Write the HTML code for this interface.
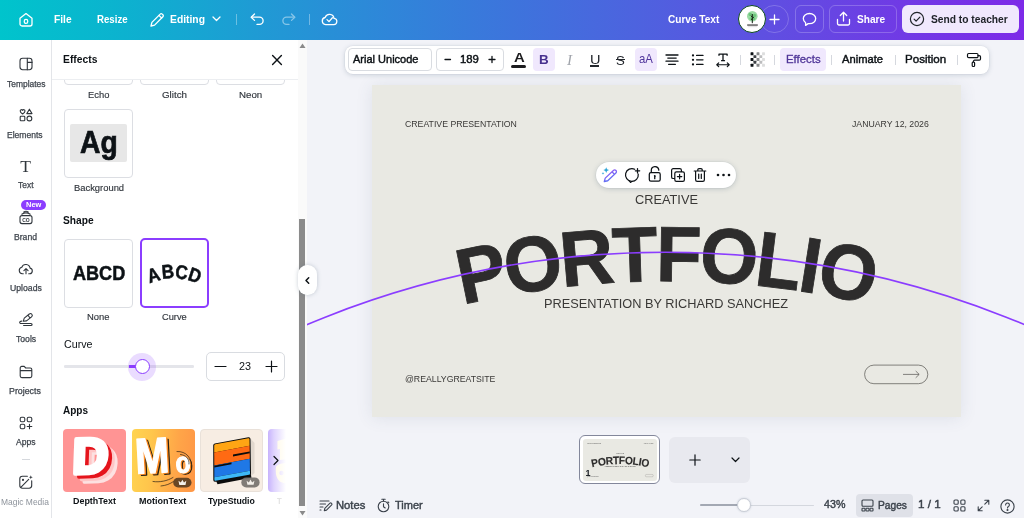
<!DOCTYPE html>
<html lang="en">
<head>
<meta charset="utf-8">
<title>Curve Text - Canva</title>
<style>
*{box-sizing:border-box;margin:0;padding:0}
html,body{width:1024px;height:518px;overflow:hidden;background:#f2f3f8;font-family:"Liberation Sans","DejaVu Sans",sans-serif;color:#0d1216}
svg{position:absolute;overflow:visible}
.tx{position:absolute;white-space:nowrap;line-height:1;transform-origin:0 50%;display:block}
.ic{fill:none;stroke:#0d1216;stroke-width:1.2;stroke-linecap:round;stroke-linejoin:round}
#hdr{position:absolute;left:0;top:0;width:1024px;height:39.700px;background:linear-gradient(90deg,#00c4cc 0%,#0cb2cf 12%,#1f9bd4 25%,#2f86d9 38%,#3d74dc 50%,#4d63df 62%,#5f4fe1 75%,#703ae5 88%,#7d2ae8 100%)}
#hdr .t{position:absolute;color:#fff;font-weight:700;font-size:11px;line-height:14px;top:12px;white-space:nowrap;letter-spacing:-.1px}
#hdr .w{fill:none;stroke:#fff;stroke-width:1.3;stroke-linecap:round;stroke-linejoin:round}
#rail{position:absolute;left:0;top:40px;width:52px;height:478px;background:#fff;border-right:1px solid #e3e5e9}
.rl{position:absolute;width:60px;left:-4px;text-align:center;font-size:8.4px;color:#30363c;line-height:10px;white-space:nowrap}
.ri{fill:none;stroke:#30363c;stroke-width:1.1;stroke-linecap:round;stroke-linejoin:round}
#panel{position:absolute;left:52px;top:40px;width:246px;height:478px;background:#fff;overflow:hidden}
#panel .h{position:absolute;font-weight:700;font-size:11px;line-height:14px;white-space:nowrap;color:#0d1216}
#panel .lb{position:absolute;font-size:9.3px;line-height:12px;text-align:center;color:#30363c;white-space:nowrap;width:69px}
.card{position:absolute;width:69px;height:69px;border:1px solid #dcdee3;border-radius:4px;background:#fff}
#sb{position:absolute;left:298px;top:40px;width:9px;height:478px;background:#fafafa}
#canvas{position:absolute;left:307px;top:40px;width:717px;height:478px;background:#f2f3f8;overflow:hidden}
#tb{position:absolute;left:344.600px;top:45.900px;width:644px;height:27.700px;background:#fff;border-radius:8px;box-shadow:0 0 0 .5px rgba(64,87,109,.07),0 1px 5px rgba(64,87,109,.22)}
#tb .t{position:absolute;font-size:11px;line-height:14px;top:7px;font-weight:700;color:#0d1216;white-space:nowrap;letter-spacing:-.1px}
.sep{position:absolute;width:1px;background:#d8dbe0;top:8px;height:12px}
#slide{position:absolute;left:372px;top:85.400px;width:588.800px;height:331.200px;background:#e9e9e3;box-shadow:0 1px 16px rgba(64,80,110,.11)}
.st{position:absolute;will-change:transform;white-space:nowrap;color:#3a3937;font-family:"Liberation Sans",sans-serif;line-height:1}
#foot .t{position:absolute;font-size:10.5px;line-height:14px;top:499px;font-weight:700;color:#3b424b;white-space:nowrap}
</style>
</head>
<body>
<div id="root" style="position:absolute;left:0;top:0;width:1024px;height:518px;will-change:transform">
<div id="hdr">
  <svg class="w" style="left:18px;top:12px" width="16" height="16" viewBox="0 0 16 16"><path d="M2 6.2 L8 1.6 L14 6.2 V12 a2 2 0 0 1 -2 2 H4 a2 2 0 0 1 -2 -2 Z"/><rect x="6.3" y="7.4" width="3.4" height="4" rx="1.6"/></svg>
  <span class="tx" style="left:53.92px;top:14.03px;font-size:10.60px;font-weight:700;color:#fff;transform:scaleX(0.9649);">File</span>
  <span class="tx" style="left:96.96px;top:14.03px;font-size:10.60px;font-weight:700;color:#fff;transform:scaleX(0.9133);">Resize</span>
  <svg class="w" style="left:149px;top:12px" width="16" height="16" viewBox="0 0 16 16"><path d="M2 14 l.9-3.6 L11.2 2.1 a1.4 1.4 0 0 1 2 0 l.7.7 a1.4 1.4 0 0 1 0 2 L5.6 13.1 Z"/><path d="M10 3.4 l2.6 2.6"/></svg>
  <span class="tx" style="left:170.22px;top:14.03px;font-size:10.60px;font-weight:700;color:#fff;transform:scaleX(0.9738);">Editing</span>
  <svg class="w" style="left:212px;top:16px" width="9" height="6" viewBox="0 0 9 6"><path d="M1 1 L4.5 4.5 L8 1"/></svg>
  <div style="position:absolute;left:236px;top:14px;width:1px;height:11px;background:rgba(255,255,255,.35)"></div>
  <svg class="w" style="left:250px;top:13px" width="15" height="13" viewBox="0 0 15 13"><path d="M4.5 1 L1.2 4.2 L4.5 7.4"/><path d="M1.5 4.2 H9.5 a3.6 3.6 0 0 1 0 7.2 H7"/></svg>
  <svg class="w" style="left:281px;top:13px;opacity:.45" width="15" height="13" viewBox="0 0 15 13"><path d="M10.5 1 L13.8 4.2 L10.5 7.4"/><path d="M13.5 4.2 H5.5 a3.6 3.6 0 0 0 0 7.2 H8"/></svg>
  <div style="position:absolute;left:309px;top:14px;width:1px;height:11px;background:rgba(255,255,255,.35)"></div>
  <svg class="w" style="left:321px;top:12px" width="17" height="14" viewBox="0 0 17 14"><path d="M4.6 12.6 a3.6 3.6 0 0 1 -.5 -7.1 a4.6 4.6 0 0 1 8.9 .9 a3.1 3.1 0 0 1 -.6 6.2 Z"/><path d="M6 7.6 l2 2 l3.4 -3.8"/></svg>
  <span class="tx" style="left:667.79px;top:14.03px;font-size:10.60px;font-weight:700;color:#fff;transform:scaleX(0.9507);">Curve Text</span>
  <div style="position:absolute;left:760.100px;top:4.900px;width:28.600px;height:28.600px;border-radius:50%;border:1px solid rgba(255,255,255,.2)"></div>
  <svg class="w" style="left:769px;top:14px" width="11" height="11" viewBox="0 0 11 11"><path d="M5.5 1 V10 M1 5.500 H10"/></svg>
  <div style="position:absolute;left:738px;top:5px;width:28px;height:28px;border-radius:50%;background:#fff;border:1.400px solid #0c4a1c"></div>
  <svg style="left:744px;top:9px" width="16" height="20" viewBox="0 0 16 20"><circle cx="8.300" cy="7.200" r="5.300" fill="#9bdba5"/><circle cx="6.300" cy="5.500" r="1.800" fill="#6cc57b"/><circle cx="10.500" cy="6.500" r="1.700" fill="#6cc57b"/><circle cx="7" cy="9.500" r="1.600" fill="#78cc86"/><circle cx="10" cy="9.800" r="1.400" fill="#6cc57b"/><path d="M8.300 5 V14.200 M8.300 8 L6.800 6.800 M8.300 9.300 L9.900 8.100 M8.300 10.800 L7 9.900" stroke="#10200f" stroke-width="1" fill="none"/><rect x="3.200" y="15.400" width="10.600" height="1.300" fill="#4a4a4a"/><rect x="3.800" y="17.500" width="9.400" height=".6" fill="#c9c9c9"/></svg>
  <div style="position:absolute;left:795px;top:5px;width:29px;height:28px;border-radius:6px;border:1px solid rgba(255,255,255,.22)"></div>
  <svg class="w" style="left:802px;top:12px" width="15" height="15" viewBox="0 0 15 15"><path d="M7.500 1.500 C11 1.500 13.700 3.700 13.700 6.600 C13.700 9.500 11 11.700 7.500 11.700 C7 11.700 6.600 11.650 6.200 11.600 L3.600 13.400 V10.700 C2.200 9.700 1.300 8.300 1.300 6.600 C1.300 3.700 4 1.500 7.500 1.500 Z"/></svg>
  <div style="position:absolute;left:829px;top:5px;width:68px;height:28px;border-radius:6px;border:1px solid rgba(255,255,255,.22)"></div>
  <svg class="w" style="left:836px;top:11px" width="15" height="16" viewBox="0 0 15 16"><path d="M7.500 10 V1.500 M4.300 4.500 L7.500 1.300 L10.700 4.500"/><path d="M1.500 8.500 V12.500 a1.500 1.500 0 0 0 1.500 1.500 H12 a1.500 1.500 0 0 0 1.500 -1.500 V8.500"/></svg>
  <span class="tx" style="left:857.32px;top:14.03px;font-size:10.60px;font-weight:700;color:#fff;transform:scaleX(0.9549);">Share</span>
  <div style="position:absolute;left:902px;top:5px;width:117px;height:28px;border-radius:6px;background:#f0e8fd"></div>
  <svg style="left:908.600px;top:11.300px" width="16" height="16" viewBox="0 0 16 16" fill="none" stroke="#20242a" stroke-width="1.200" stroke-linecap="round" stroke-linejoin="round"><circle cx="8" cy="8" r="6.600"/><path d="M5.100 8.200 l2 2 l3.800 -4"/></svg>
  <span class="tx" style="left:930.51px;top:14.03px;font-size:10.60px;font-weight:700;color:#20242a;transform:scaleX(0.9662);">Send to teacher</span>
</div>
<div id="rail"></div>
<!-- rail items (absolute page coords) -->
<svg class="ri" style="left:19px;top:57px" width="14" height="14" viewBox="0 0 14 14"><rect x="1" y="1.300" width="12" height="11.400" rx="2.600"/><path d="M8.300 1.300 V12.700 M8.300 5.400 H13"/></svg>
<span class="tx" style="left:6.71px;top:79.59px;font-size:8.40px;font-weight:400;color:#3f454d;transform:scaleX(1.0079);-webkit-text-stroke:.25px #3f454d">Templates</span>
<svg class="ri" style="left:19px;top:108px" width="14" height="14" viewBox="0 0 14 14"><path d="M3.600 6 C2.300 5 1.200 4.100 1.200 2.900 a1.250 1.250 0 0 1 2.400 -.5 a1.250 1.250 0 0 1 2.400 .5 C6 4.100 4.900 5 3.600 6 Z"/><path d="M10.400 1.200 L13 5.600 H7.800 Z"/><rect x="1.200" y="8.200" width="4.600" height="4.600" rx=".8"/><circle cx="10.400" cy="10.500" r="2.400"/></svg>
<span class="tx" style="left:7.40px;top:130.69px;font-size:8.40px;font-weight:400;color:#3f454d;transform:scaleX(1.0200);-webkit-text-stroke:.25px #3f454d">Elements</span>
<div style="position:absolute;left:15.200px;top:156.200px;width:21px;text-align:center;font-family:'Liberation Serif',serif;font-size:17.500px;line-height:20px;color:#30363c">T</div>
<span class="tx" style="left:17.71px;top:181.49px;font-size:8.40px;font-weight:400;color:#3f454d;transform:scaleX(1.0091);-webkit-text-stroke:.25px #3f454d">Text</span>
<div style="position:absolute;left:20.800px;top:199.600px;width:24.900px;height:10.800px;border-radius:5.400px;background:#8b3dff"></div><span class="tx" style="left:25.51px;top:201.24px;font-size:7.40px;font-weight:700;color:#fff;transform:scaleX(1.0108);">New</span>
<svg class="ri" style="left:19px;top:210px" width="14" height="15" viewBox="0 0 14 15"><rect x="1" y="5.600" width="12" height="8" rx="2"/><path d="M2.800 4.200 C5.500 2.500 8.500 2.500 11.200 4.200 M4.800 1.900 C6.300 1.100 7.700 1.100 9.200 1.900"/><text x="7" y="11.600" font-size="5" font-weight="700" text-anchor="middle" fill="#30363c" stroke="none" font-family="Liberation Sans,sans-serif">CO</text></svg>
<span class="tx" style="left:14.19px;top:233.19px;font-size:8.40px;font-weight:400;color:#3f454d;transform:scaleX(1.0290);-webkit-text-stroke:.25px #3f454d">Brand</span>
<svg class="ri" style="left:17.600px;top:261.700px" width="16" height="13" viewBox="0 0 16 13"><path d="M5.300 11.800 H4.300 a3.300 3.300 0 0 1 -.5 -6.500 a4.300 4.300 0 0 1 8.300 .8 a2.900 2.900 0 0 1 -.4 5.700 H10.700"/><path d="M8 11.800 V6.800 M5.900 8.700 L8 6.600 L10.100 8.700"/></svg>
<span class="tx" style="left:9.53px;top:284.39px;font-size:8.40px;font-weight:400;color:#3f454d;transform:scaleX(1.0345);-webkit-text-stroke:.25px #3f454d">Uploads</span>
<svg class="ri" style="left:0;top:0" width="52" height="400" viewBox="0 0 52 400"><g transform="translate(23.300 321.200) rotate(-39)"><path d="M0 0 L2.700 -1.800 H9.200 a1.800 1.800 0 0 1 0 3.600 H2.700 Z M7.300 -1.800 V1.800"/></g><path d="M21.800 321.100 C19.300 321 18.900 323.400 21.200 323.450 H30.900 C32.500 323.450 32.500 325.500 30.900 325.500 H23.600"/></svg>
<span class="tx" style="left:15.81px;top:335.49px;font-size:8.40px;font-weight:400;color:#3f454d;transform:scaleX(1.0304);-webkit-text-stroke:.25px #3f454d">Tools</span>
<svg class="ri" style="left:19px;top:364.900px" width="14" height="14" viewBox="0 0 14 14"><path d="M1.200 4.800 V3 a1.600 1.600 0 0 1 1.600 -1.600 H5.200 l1.500 1.600 H11.200 a1.600 1.600 0 0 1 1.600 1.600 V11 a1.600 1.600 0 0 1 -1.600 1.600 H2.800 a1.600 1.600 0 0 1 -1.600 -1.600 Z M1.200 5.600 H12.800"/></svg>
<span class="tx" style="left:9.47px;top:386.89px;font-size:8.40px;font-weight:400;color:#3f454d;transform:scaleX(1.0528);-webkit-text-stroke:.25px #3f454d">Projects</span>
<svg class="ri" style="left:19px;top:415.900px" width="14" height="14" viewBox="0 0 14 14"><rect x="1.200" y="1.200" width="4.600" height="4.600" rx="1.500"/><rect x="8.200" y="1.200" width="4.600" height="4.600" rx="1.500"/><rect x="1.200" y="8.200" width="4.600" height="4.600" rx="1.500"/><path d="M10.500 8.200 V12.800 M8.200 10.500 H12.800"/></svg>
<span class="tx" style="left:15.98px;top:437.99px;font-size:8.40px;font-weight:400;color:#3f454d;transform:scaleX(1.0253);-webkit-text-stroke:.25px #3f454d">Apps</span>
<div style="position:absolute;left:22px;top:459px;width:8px;height:1px;background:#d5d8dd"></div>
<svg class="ri" style="left:0;top:0" width="52" height="518" viewBox="0 0 52 518"><path d="M27.400 476.200 H22.400 a2.600 2.600 0 0 0 -2.600 2.600 V485.600 a2.600 2.600 0 0 0 2.600 2.600 H29.100 a2.600 2.600 0 0 0 2.600 -2.600 V480.800"/><path d="M21.300 486.800 L28.700 479.300"/><circle cx="23" cy="479.900" r="1.050" fill="#30363c" stroke="none"/><path d="M30.800 475.300 l.55 1.450 l1.450 .55 l-1.450 .55 l-.55 1.450 l-.55 -1.450 l-1.450 -.55 l1.450 -.55 Z" fill="#30363c" stroke="none"/></svg>
<span class="tx" style="left:1.31px;top:497.99px;font-size:8.40px;font-weight:400;color:#8d939b;transform:scaleX(1.0077);">Magic Media</span>
<div id="panel"></div>
<div id="pcontent" style="position:absolute;left:52px;top:80px;width:246px;height:438px;overflow:hidden">
 <div style="position:absolute;left:-52px;top:-80px;width:400px;height:518px">
  <div class="card" style="left:64px;top:16px"></div>
  <div class="card" style="left:140px;top:16px"></div>
  <div class="card" style="left:216px;top:16px"></div>
 </div>
</div>
<div style="position:absolute;left:52px;top:79px;width:246px;height:1px;background:#eceef1"></div>
<div id="pitems">
<style>#pitems .h{position:absolute;font-weight:700;font-size:11px;line-height:14px;white-space:nowrap;color:#0d1216;letter-spacing:-.1px}
#pitems .lb{position:absolute;font-size:9.300px;line-height:12px;text-align:center;color:#30363c;white-space:nowrap;width:89px}</style>
  <span class="tx" style="left:63.22px;top:54.36px;font-size:10.80px;font-weight:700;color:#0d1216;transform:scaleX(0.9552);">Effects</span>
  <svg style="left:272px;top:55px" width="10" height="10" viewBox="0 0 10 10" fill="none" stroke="#0d1216" stroke-width="1.400" stroke-linecap="round"><path d="M.6 .6 L9.400 9.400 M9.400 .6 L.6 9.400"/></svg>
  <span class="tx" style="left:87.53px;top:89.66px;font-size:9.50px;font-weight:400;color:#30353c;transform:scaleX(0.9862);-webkit-text-stroke:.15px #30353c">Echo</span>
  <span class="tx" style="left:162.11px;top:89.66px;font-size:9.50px;font-weight:400;color:#30353c;transform:scaleX(1.0302);-webkit-text-stroke:.15px #30353c">Glitch</span>
  <span class="tx" style="left:238.70px;top:89.66px;font-size:9.50px;font-weight:400;color:#30353c;transform:scaleX(1.0226);-webkit-text-stroke:.15px #30353c">Neon</span>
  <div class="card" style="left:64px;top:109px"></div>
  <div style="position:absolute;left:70.300px;top:124.400px;width:56.700px;height:37.900px;background:#e7e7e7;border-radius:2px"></div>
  <span class="tx" style="left:80.12px;top:126.68px;font-size:30.50px;font-weight:700;color:#0d1216;transform:scaleX(0.9266);-webkit-text-stroke:.7px #0d1216">Ag</span>
  <span class="tx" style="left:73.53px;top:182.86px;font-size:9.50px;font-weight:400;color:#30353c;transform:scaleX(0.9875);-webkit-text-stroke:.15px #30353c">Background</span>
  <span class="tx" style="left:63.41px;top:214.66px;font-size:10.80px;font-weight:700;color:#0d1216;transform:scaleX(0.9451);">Shape</span>
  <div class="card" style="left:64px;top:239px"></div>
  <div class="card" style="left:139.500px;top:238.200px;width:69.700px;height:69.700px;border:2px solid #8b3dff;border-radius:5px"></div>
  <span class="tx" style="left:72.67px;top:262.73px;font-size:20.40px;font-weight:700;color:#0d1216;transform:scaleX(0.8870);-webkit-text-stroke:.5px #0d1216">ABCD</span>
  <svg style="left:140px;top:239px" width="69" height="69" viewBox="0 0 69 69" font-family="Liberation Sans,sans-serif" font-weight="700" font-size="19.500" fill="#0d1216" stroke="#0d1216" stroke-width=".5" text-anchor="middle">
    <text transform="translate(15.500 42.500) rotate(-17) scale(.88 1)">A</text>
    <text transform="translate(28.500 39.300) rotate(-5) scale(.88 1)">B</text>
    <text transform="translate(41 39.800) rotate(6) scale(.88 1)">C</text>
    <text transform="translate(52.800 42.600) rotate(18) scale(.88 1)">D</text>
  </svg>
  <span class="tx" style="left:87.13px;top:312.36px;font-size:9.50px;font-weight:400;color:#30353c;transform:scaleX(0.9903);-webkit-text-stroke:.15px #30353c">None</span>
  <span class="tx" style="left:162.24px;top:312.36px;font-size:9.50px;font-weight:400;color:#30353c;transform:scaleX(0.9778);-webkit-text-stroke:.15px #30353c">Curve</span>
  <span class="tx" style="left:63.67px;top:339.19px;font-size:11.00px;font-weight:400;color:#0d1216;transform:scaleX(0.9716);">Curve</span>
  <div style="position:absolute;left:64px;top:365px;width:130px;height:2.500px;border-radius:1.200px;background:#e4e5ea"></div>
  <div style="position:absolute;left:128.500px;top:364.800px;width:14px;height:3px;background:#8b3dff"></div>
  <div style="position:absolute;left:128px;top:352.500px;width:28px;height:28px;border-radius:50%;background:rgba(139,61,255,.18)"></div>
  <div style="position:absolute;left:134.500px;top:359px;width:15px;height:15px;border-radius:50%;background:#fff;border:1.300px solid #8b3dff"></div>
  <div style="position:absolute;left:206px;top:352px;width:79px;height:28.500px;border:1px solid #d9dce1;border-radius:5px;background:#fff"></div>
  <svg style="left:214px;top:360px" width="64" height="13" viewBox="0 0 64 13" fill="none" stroke="#0d1216" stroke-width="1.200" stroke-linecap="round"><path d="M1 6.500 H12 M52 6.500 H63 M57.500 1 V12"/></svg>
  <span class="tx" style="left:239.46px;top:361.58px;font-size:10.30px;font-weight:400;color:#0d1216;transform:scaleX(1.0480);">23</span>
  <span class="tx" style="left:63.46px;top:405.36px;font-size:10.80px;font-weight:700;color:#0d1216;transform:scaleX(0.9274);">Apps</span>
</div>
<div id="apps">
<style>#apps .al{position:absolute;top:495px;width:83px;text-align:center;font-weight:700;font-size:9px;line-height:12px;color:#0d1216;white-space:nowrap}
#apps .ac{position:absolute;top:429px;width:63px;height:63px;border-radius:4px;overflow:hidden}
#apps svg{left:0;top:0}</style>
  <div class="ac" style="left:63.300px;top:429px;width:62.700px;height:62.700px;background:#ff9494">
    <svg width="63" height="63" viewBox="0 0 63 63" font-family="Liberation Sans,sans-serif" font-weight="700" font-size="49.500" text-anchor="middle" stroke-linejoin="round">
      <g transform="translate(2.300 -1.800) skewX(-4) rotate(-2 28 28)">
      <text x="36.800" y="54.200" fill="#fde1e1" stroke="#fde1e1" stroke-width="4">D</text>
      <text x="34" y="51.700" fill="#ffc6c6" stroke="#ffc6c6" stroke-width="4">D</text>
      <text x="31" y="49" fill="#e5141c" stroke="#e5141c" stroke-width="4">D</text>
      <text x="27.300" y="45.700" fill="#fff" stroke="#fff" stroke-width="4.500">D</text>
      </g>
    </svg>
  </div>
  <div class="ac" style="left:132px;top:429px;width:62.500px;height:62.700px;background:linear-gradient(95deg,#ffd451 0%,#ffc64c 30%,#ffa548 70%,#ff9646 100%)">
    <svg width="63" height="63" viewBox="0 0 63 63" font-family="Liberation Sans,sans-serif" font-weight="700" text-anchor="middle" stroke-linejoin="round">
      <g transform="rotate(-3 30 30)">
      <g font-size="50">
      <text x="20.300" y="43.300" fill="#2b2316" stroke="#2b2316" stroke-width="1.500" transform="translate(2.600 2)" textLength="34" lengthAdjust="spacingAndGlyphs">M</text>
      <text x="20.300" y="43.300" fill="#ff8a1f" stroke="#ff8a1f" stroke-width="1.500" transform="translate(1.300 1)" textLength="34" lengthAdjust="spacingAndGlyphs">M</text>
      <text x="20.300" y="43.300" fill="#fff" stroke="#fff" stroke-width="1.500" textLength="34" lengthAdjust="spacingAndGlyphs">M</text>
      </g>
      <g font-size="29.500">
      <text x="50.800" y="44.800" fill="#2b2316" stroke="#2b2316" stroke-width="1.200" transform="translate(2.200 1.200)" textLength="15" lengthAdjust="spacingAndGlyphs">o</text>
      <text x="50.800" y="44.800" fill="#ff8a1f" stroke="#ff8a1f" stroke-width="1.200" transform="translate(1.100 .6)" textLength="15" lengthAdjust="spacingAndGlyphs">o</text>
      <text x="50.800" y="44.800" fill="#fff" stroke="#fff" stroke-width="1.200" textLength="15" lengthAdjust="spacingAndGlyphs">o</text>
      </g>
      </g>
      <path d="M45 22.500 C54 22 60.500 29 59.500 39 M48.500 25.500 C54 26 57.500 30 57 35 M21 52.500 C28 53.500 35 52 41 48.500 M29 57 C34 56.500 38 55 41.500 52.500" fill="none" stroke="#2b2316" stroke-width=".7" stroke-linecap="round"/>
      <rect x="41.200" y="48.700" width="18.300" height="9.800" rx="4.900" fill="#5e3f22" opacity=".93"/>
      <path d="M47.300 55.900 L46.500 51.800 L48.800 53.500 L50.400 50.700 L52 53.500 L54.300 51.800 L53.500 55.900 Z" fill="#f4f0ea"/>
    </svg>
  </div>
  <div class="ac" style="left:200px;top:429.300px;width:63px;height:62.400px;background:#f7ede3;border:1px solid #e9e1d9">
    <svg width="63" height="63" viewBox="0 0 63 63" style="left:-1px;top:-1.300px">
      <path d="M17 53 L51 47 L54.500 44 L54.500 14 L51 10 Z" fill="#cfc6bd" opacity=".55"/>
      <path d="M15.500 50.500 L17.500 55.200 L51.500 48.800 L50.700 45 Z" fill="#0c0c0c"/>
      <path d="M13.200 16.300 Q13.200 14.700 14.800 14.400 L48.300 8.200 Q50.400 7.900 50.500 10 L51 44.600 Q51 46.300 49.300 46.600 L15.300 52.700 Q13.300 53 13.300 51 Z" fill="#0c0c0c"/>
      <path d="M14.200 16.500 Q14.200 15.500 15.200 15.300 L48.300 9.200 Q49.500 9 49.500 10.200 L49.600 16.800 L14.200 23.400 Z" fill="#ffa514"/>
      <path d="M14.200 23.400 L49.600 16.800 L49.800 29.800 L14.300 36.400 Z" fill="#ff6a13"/>
      <path d="M14.300 36.400 L49.800 29.800 L49.950 41.800 L14.350 48.300 Z" fill="#1f78e6"/>
      <path d="M14.350 48.300 L49.950 41.800 L50 44.400 Q50 45.500 49 45.700 L15.500 51.700 Q14.400 51.900 14.400 50.800 Z" fill="#3db8f7"/>
      <path d="M33 25.600 L49.700 22.500 L49.750 24.300 L33 27.400 Z" fill="#0c0c0c"/>
      <path d="M14.300 36.800 L31.500 33.600 L31.500 35.300 L14.300 38.500 Z" fill="#0c0c0c"/>
      <rect x="41.300" y="48.400" width="18.300" height="10.100" rx="5" fill="#77736f" opacity=".93"/>
      <path d="M47.400 55.800 L46.600 51.700 L48.900 53.400 L50.500 50.600 L52.100 53.400 L54.400 51.700 L53.600 55.800 Z" fill="#f4f0ea"/>
    </svg>
  </div>
  <div class="ac" style="left:268.300px;width:18px;border-radius:4px 0 0 4px;background:#b79dfc">
    <svg width="18" height="63" viewBox="0 0 18 63"><path d="M9.500 12 L20 9 V30 L12 31 V20 L9.500 20.500 Z M8 38 C10 34 18 34 19 34 V54 C12 55 6.500 50 8 38 Z" fill="#fff3c4"/><circle cx="13.500" cy="44" r="2.200" fill="#b79dfc"/></svg>
  </div>
  <div style="position:absolute;left:264px;top:425px;width:22px;height:90px;background:linear-gradient(90deg,rgba(255,255,255,0) 0%,rgba(255,255,255,.55) 45%,#fff 100%)"></div>
  <svg style="left:273px;top:455px" width="6" height="11" viewBox="0 0 6 11" fill="none" stroke="#0d1216" stroke-width="1.200" stroke-linecap="round" stroke-linejoin="round"><path d="M1 1.500 L5 5.500 L1 9.500"/></svg>
  <span class="tx" style="left:72.91px;top:496.07px;font-size:9.60px;font-weight:700;color:#0d1216;transform:scaleX(0.9280);">DepthText</span>
  <span class="tx" style="left:139.01px;top:496.07px;font-size:9.60px;font-weight:700;color:#0d1216;transform:scaleX(0.9371);">MotionText</span>
  <span class="tx" style="left:207.90px;top:496.07px;font-size:9.60px;font-weight:700;color:#0d1216;transform:scaleX(0.9085);">TypeStudio</span>
  <span class="tx" style="left:276.92px;top:496.07px;font-size:9.60px;font-weight:700;color:#e3e3e3;transform:scaleX(0.7945);">T</span>
</div>
<!-- scrollbar -->
<div id="sb"></div>
<div style="position:absolute;left:298.900px;top:218.500px;width:6px;height:287px;background:#8b8b8b"></div>
<svg style="left:298px;top:42px" width="9" height="8" viewBox="0 0 9 8"><path d="M1.500 6 L4.500 1.500 L7.500 6 Z" fill="#8a8a8a"/></svg>
<svg style="left:298px;top:509px" width="9" height="8" viewBox="0 0 9 8"><path d="M1.500 2 L4.500 6.500 L7.500 2 Z" fill="#8a8a8a"/></svg>
<div id="canvas"></div>
<div id="slide"></div>
<div id="slidetext">
  <div class="st" style="left:404.500px;top:120.100px;font-size:8.720px">CREATIVE PRESENTATION</div>
  <div class="st" style="left:852.300px;top:120.100px;font-size:8.720px">JANUARY 12, 2026</div>
  <div class="st" style="left:634.500px;top:194.300px;font-size:12.790px">CREATIVE</div>
  <div class="st" style="left:544px;top:298.200px;font-size:12.770px">PRESENTATION BY RICHARD SANCHEZ</div>
  <div class="st" style="left:404.500px;top:375.300px;font-size:8.720px">@REALLYGREATSITE</div>
  <svg style="left:0;top:0" width="1024" height="518" viewBox="0 0 1024 518">
    <rect x="864.600" y="365.100" width="63.200" height="18.600" rx="9.300" fill="none" stroke="#55534f" stroke-width=".7"/>
    <path d="M903 374.400 H919 M915.700 371 L919.200 374.400 L915.700 377.800" fill="none" stroke="#55534f" stroke-width=".7"/>
    <g font-family="Liberation Sans,sans-serif" font-weight="700" fill="#2d2c2c">
<text transform="translate(486.78 299.49) rotate(-11.597) scale(1 1.050)" text-anchor="middle" font-size="74.60" stroke="#2d2c2c" stroke-width=".8" stroke-linejoin="miter">P</text>
<text transform="translate(536.73 290.71) rotate(-8.354) scale(1 1.050)" text-anchor="middle" font-size="74.60" stroke="#2d2c2c" stroke-width=".8" stroke-linejoin="miter">O</text>
<text transform="translate(589.02 284.59) rotate(-4.986) scale(1 1.050)" text-anchor="middle" font-size="74.60" stroke="#2d2c2c" stroke-width=".8" stroke-linejoin="miter">R</text>
<text transform="translate(635.73 281.74) rotate(-1.994) scale(1 1.050)" text-anchor="middle" font-size="74.60" stroke="#2d2c2c" stroke-width=".8" stroke-linejoin="miter">T</text>
<text transform="translate(678.61 281.28) rotate(0.749) scale(1 1.050)" text-anchor="middle" font-size="74.60" stroke="#2d2c2c" stroke-width=".8" stroke-linejoin="miter">F</text>
<text transform="translate(727.31 283.24) rotate(3.866) scale(1 1.050)" text-anchor="middle" font-size="74.60" stroke="#2d2c2c" stroke-width=".8" stroke-linejoin="miter">O</text>
<text transform="translate(775.84 287.85) rotate(6.984) scale(1 1.050)" text-anchor="middle" font-size="74.60" stroke="#2d2c2c" stroke-width=".8" stroke-linejoin="miter">L</text>
<text transform="translate(806.73 292.18) rotate(8.978) scale(1 1.050)" text-anchor="middle" font-size="74.60" stroke="#2d2c2c" stroke-width=".8" stroke-linejoin="miter">I</text>
<text transform="translate(843.21 298.72) rotate(11.348) scale(1 1.050)" text-anchor="middle" font-size="74.60" stroke="#2d2c2c" stroke-width=".8" stroke-linejoin="miter">O</text>

    </g>
    <clipPath id="cv"><rect x="307" y="40" width="717" height="478"/></clipPath>
    <circle cx="665.700" cy="1177.200" r="925" fill="none" stroke="#8b3dff" stroke-width="1.600" clip-path="url(#cv)"/>
  </svg>
</div>
<!-- floating element toolbar -->
<div style="position:absolute;left:596px;top:162px;width:140px;height:26px;border-radius:13px;background:#fff;box-shadow:0 0 0 .5px rgba(64,87,109,.07),0 1px 5px rgba(64,87,109,.25)"></div>
<svg style="left:0;top:0" width="1024" height="518" viewBox="0 0 1024 518" fill="none" stroke-linecap="round" stroke-linejoin="round">
  <defs><linearGradient id="pg" x1="0" y1="1" x2="1" y2="0"><stop offset="0" stop-color="#5d72f2"/><stop offset="1" stop-color="#8a5cf6"/></linearGradient></defs>
  <g transform="translate(604.300 181.500) rotate(-43.300)"><path d="M0 0 L3 -1.800 H14.200 a1.800 1.800 0 0 1 0 3.600 H3 Z M12.300 -1.800 V1.800" stroke="url(#pg)" stroke-width="1.300"/></g>
  <path d="M606.200 167.300 l.8 2 l2 .8 l-2 .8 l-.8 2 l-.8 -2 l-2 -.8 l2 -.8 Z" fill="#2aa3d6"/>
  <path d="M603 172 l.4 .95 l.95 .4 l-.95 .4 l-.4 .95 l-.4 -.95 l-.95 -.4 l.95 -.4 Z" fill="#2aa3d6"/>
  <g stroke="#0d1216" stroke-width="1.250">
    <path d="M634.700 169.250 A6.400 6.400 0 1 0 638.250 174.200"/><path d="M629 180.700 L630.500 182.500 L632 181.400" stroke-width="1.100"/>
    <path d="M637.500 168.600 V173 M635.300 170.800 H639.700"/>
    <rect x="649.300" y="172.600" width="10.900" height="8.500" rx="1.600"/>
    <path d="M651.300 172.400 V170.300 a3.750 3.750 0 0 1 7.450 -.6 V170.200"/>
    <path d="M654.750 178.700 V176.300" stroke-width="1.300"/><circle cx="654.750" cy="175.800" r=".9" fill="#0d1216" stroke="none"/>
  </g>
</svg>
<svg class="ic" style="left:670px;top:167px" width="16" height="16" viewBox="0 0 16 16"><path d="M4.500 11.500 H3.200 a1.600 1.600 0 0 1 -1.600 -1.600 V3.200 a1.600 1.600 0 0 1 1.600 -1.600 H9.800 a1.600 1.600 0 0 1 1.600 1.600 V4.400"/><rect x="4.800" y="4.800" width="9.600" height="9.600" rx="1.600"/><path d="M9.600 7.400 V11.800 M7.400 9.600 H11.800"/></svg>
<svg class="ic" style="left:692px;top:167px" width="16" height="16" viewBox="0 0 16 16"><path d="M2.200 4 H13.800 M5.800 3.800 V2.800 a1.200 1.200 0 0 1 1.200 -1.200 H9 a1.200 1.200 0 0 1 1.200 1.200 V3.800 M3.600 4.200 V12.800 a1.600 1.600 0 0 0 1.600 1.600 H10.800 a1.600 1.600 0 0 0 1.600 -1.600 V4.200 M6.700 7 V11.500 M9.300 7 V11.500"/></svg>
<svg style="left:716px;top:173px" width="15" height="4" viewBox="0 0 15 4" fill="#0d1216"><circle cx="2" cy="2" r="1.300"/><circle cx="7.500" cy="2" r="1.300"/><circle cx="13" cy="2" r="1.300"/></svg>
<!-- collapse handle -->
<div style="position:absolute;left:298.200px;top:265.400px;width:18.500px;height:29.800px;border-radius:9.200px;background:#fff;box-shadow:0 0 4px rgba(64,87,109,.28)"></div>
<svg style="left:304px;top:276px" width="7" height="9" viewBox="0 0 7 9" fill="none" stroke="#0d1216" stroke-width="1.500" stroke-linecap="round" stroke-linejoin="round"><path d="M4.700 1.800 L2 4.500 L4.700 7.200"/></svg>
<div id="tb"></div>
<div id="tbi">
<style>#tbi .t{position:absolute;font-size:11px;line-height:14px;top:53px;font-weight:700;color:#0d1216;white-space:nowrap;letter-spacing:-.1px}
#tbi .sp{position:absolute;width:1px;background:#d5d8de;top:54.500px;height:10.500px}
#tbi .bx{position:absolute;top:48px;height:23px;border-radius:4px}
#tbi .g{fill:none;stroke:#0d1216;stroke-width:1.200;stroke-linecap:round;stroke-linejoin:round}</style>
  <div class="bx" style="left:347.500px;width:84.500px;border:1px solid #d9dce1"></div>
  <span class="tx" style="left:353.48px;top:54.06px;font-size:10.80px;font-weight:400;color:#0d1216;transform:scaleX(1.0199);-webkit-text-stroke:.42px #0d1216">Arial Unicode</span>
  <div class="bx" style="left:435.500px;width:68px;border:1px solid #d9dce1"></div>
  <svg class="g" style="left:444px;top:55px" width="52" height="9" viewBox="0 0 52 9"><path d="M1 4.500 H6.500 M45 4.500 H51 M48 1.500 V7.500" stroke-width="1.300"/></svg>
  <span class="tx" style="left:460.14px;top:54.23px;font-size:10.60px;font-weight:400;color:#0d1216;transform:scaleX(1.0686);-webkit-text-stroke:.42px #0d1216">189</span>
  <span class="tx" style="left:513.64px;top:51.76px;font-size:12.80px;font-weight:700;color:#1d1d1f;transform:scaleX(1.1626);">A</span>
  <div style="position:absolute;left:511px;top:64.500px;width:15px;height:3px;border-radius:1.500px;background:#1d1d1f"></div>
  <div class="bx" style="left:533px;width:22px;background:#f0e8fd"></div>
  <span class="tx" style="left:538.91px;top:53.23px;font-size:13.20px;font-weight:700;color:#47308f;transform:scaleX(1.0167);">B</span>
  <div class="t" style="left:559.500px;width:20px;text-align:center;font-size:15px;top:51.800px;line-height:16px;color:#a0a4ab;font-weight:400;font-style:italic;font-family:'Liberation Serif',serif">I</div>
  <span class="tx" style="left:589.68px;top:53.53px;font-size:12.60px;font-weight:400;color:#23272d;transform:scaleX(1.1577);">U</span>
  <div style="position:absolute;left:590.400px;top:65.400px;width:9px;height:1.300px;background:#23272d"></div>
  <span class="tx" style="left:616.21px;top:53.60px;font-size:13.00px;font-weight:400;color:#23272d;transform:scaleX(1.0132);">S</span>
  <div style="position:absolute;left:615.800px;top:59.200px;width:9.400px;height:1.200px;background:#23272d"></div>
  <div class="bx" style="left:635px;width:22px;background:#f0e8fd"></div>
  <span class="tx" style="left:639.02px;top:53.17px;font-size:12.20px;font-weight:400;color:#50349c;transform:scaleX(0.9316);">aA</span>
  <svg class="g" style="left:665px;top:53px" width="14" height="14" viewBox="0 0 14 14"><path d="M1 2 H13 M2.800 5.100 H11.200 M1 8.200 H13 M3.600 11.300 H10.400" stroke-width="1.300"/></svg>
  <svg class="g" style="left:691px;top:53px" width="14" height="14" viewBox="0 0 14 14"><path d="M5.600 2.400 H12 M5.600 6.800 H12 M5.600 11.400 H12" stroke-width="1.300"/><circle cx="2" cy="2.400" r="1.150" fill="#0d1216" stroke="none"/><circle cx="2" cy="6.800" r="1.150" fill="#0d1216" stroke="none"/><circle cx="2" cy="11.400" r="1.150" fill="#0d1216" stroke="none"/></svg>
  <svg class="g" style="left:715px;top:52px" width="16" height="16" viewBox="0 0 16 16"><path d="M4 3.300 V2.100 H12.100 V3.300 M8 2.100 V8.700 M6.600 8.700 H9.500" stroke-width="1.300"/><path d="M1.900 12.750 H14.100 M3.700 10.900 L1.800 12.750 L3.700 14.600 M12.300 10.900 L14.200 12.750 L12.300 14.600" stroke-width="1.200"/></svg>
  <div class="sp" style="left:740px"></div>
  <svg style="left:749.500px;top:52px" width="16" height="16" viewBox="0 0 16 16"><g fill="#0d1216"><rect x="0.55" y="0.30" width="2.900" height="2.900" rx=".5" opacity="1.00"/><rect x="0.55" y="6.05" width="2.900" height="2.900" rx=".5" opacity="1.00"/><rect x="0.55" y="11.85" width="2.900" height="2.900" rx=".5" opacity="1.00"/><rect x="3.45" y="3.15" width="2.900" height="2.900" rx=".5" opacity="0.80"/><rect x="3.45" y="8.85" width="2.900" height="2.900" rx=".5" opacity="0.80"/><rect x="6.55" y="0.30" width="2.900" height="2.900" rx=".5" opacity="0.50"/><rect x="6.55" y="6.05" width="2.900" height="2.900" rx=".5" opacity="0.50"/><rect x="6.55" y="11.85" width="2.900" height="2.900" rx=".5" opacity="0.50"/><rect x="9.35" y="3.15" width="2.900" height="2.900" rx=".5" opacity="0.28"/><rect x="9.35" y="8.85" width="2.900" height="2.900" rx=".5" opacity="0.28"/><rect x="12.05" y="0.30" width="2.900" height="2.900" rx=".5" opacity="0.14"/><rect x="12.05" y="6.05" width="2.900" height="2.900" rx=".5" opacity="0.14"/><rect x="12.05" y="11.85" width="2.900" height="2.900" rx=".5" opacity="0.14"/></g></svg>
  <div class="sp" style="left:774px"></div>
  <div class="bx" style="left:780px;width:45.500px;background:#f0e8fd"></div>
  <span class="tx" style="left:785.77px;top:54.06px;font-size:10.80px;font-weight:400;color:#4f3598;transform:scaleX(1.0556);-webkit-text-stroke:.3px #4f3598">Effects</span>
  <div class="sp" style="left:831px"></div>
  <span class="tx" style="left:842.48px;top:54.06px;font-size:10.80px;font-weight:400;color:#0d1216;transform:scaleX(1.0353);-webkit-text-stroke:.42px #0d1216">Animate</span>
  <div class="sp" style="left:894.500px"></div>
  <span class="tx" style="left:905.05px;top:54.06px;font-size:10.80px;font-weight:400;color:#0d1216;transform:scaleX(1.0722);-webkit-text-stroke:.42px #0d1216">Position</span>
  <div class="sp" style="left:957px"></div>
  <svg class="g" style="left:966px;top:52px" width="16" height="16" viewBox="0 0 16 16"><rect x="1.500" y="1.500" width="10.500" height="4.200" rx="1.200"/><path d="M12 3.600 H13.300 a1.200 1.200 0 0 1 1.200 1.200 V7 a1.200 1.200 0 0 1 -1.200 1.200 H8.600 a1.200 1.200 0 0 0 -1.200 1.200 V10"/><rect x="6.200" y="10" width="2.400" height="4.500" rx=".9"/></svg>
</div>
<!-- page thumbnails -->
<div style="position:absolute;left:579.200px;top:435.200px;width:81.200px;height:48.600px;border:1.500px solid #83879b;border-radius:6px;background:#fff"></div>
<div style="position:absolute;left:583px;top:439px;width:74.400px;height:41.800px;border-radius:3px;background:#e9e9e3;overflow:hidden">
  <svg style="left:-583px;top:-439px" width="1024" height="518" viewBox="0 0 1024 518"><g transform="translate(583 439) scale(.12653) translate(-372 -85)" font-family="Liberation Sans,sans-serif" fill="#2d2c2c">
    <g font-weight="700" transform="translate(666 265) scale(1.09) translate(-666 -265)">
<text transform="translate(486.78 299.49) rotate(-11.597) scale(1 1.050)" text-anchor="middle" font-size="74.60" stroke="#2d2c2c" stroke-width=".8" stroke-linejoin="miter">P</text>
<text transform="translate(536.73 290.71) rotate(-8.354) scale(1 1.050)" text-anchor="middle" font-size="74.60" stroke="#2d2c2c" stroke-width=".8" stroke-linejoin="miter">O</text>
<text transform="translate(589.02 284.59) rotate(-4.986) scale(1 1.050)" text-anchor="middle" font-size="74.60" stroke="#2d2c2c" stroke-width=".8" stroke-linejoin="miter">R</text>
<text transform="translate(635.73 281.74) rotate(-1.994) scale(1 1.050)" text-anchor="middle" font-size="74.60" stroke="#2d2c2c" stroke-width=".8" stroke-linejoin="miter">T</text>
<text transform="translate(678.61 281.28) rotate(0.749) scale(1 1.050)" text-anchor="middle" font-size="74.60" stroke="#2d2c2c" stroke-width=".8" stroke-linejoin="miter">F</text>
<text transform="translate(727.31 283.24) rotate(3.866) scale(1 1.050)" text-anchor="middle" font-size="74.60" stroke="#2d2c2c" stroke-width=".8" stroke-linejoin="miter">O</text>
<text transform="translate(775.84 287.85) rotate(6.984) scale(1 1.050)" text-anchor="middle" font-size="74.60" stroke="#2d2c2c" stroke-width=".8" stroke-linejoin="miter">L</text>
<text transform="translate(806.73 292.18) rotate(8.978) scale(1 1.050)" text-anchor="middle" font-size="74.60" stroke="#2d2c2c" stroke-width=".8" stroke-linejoin="miter">I</text>
<text transform="translate(843.21 298.72) rotate(11.348) scale(1 1.050)" text-anchor="middle" font-size="74.60" stroke="#2d2c2c" stroke-width=".8" stroke-linejoin="miter">O</text>

    </g>
    <text x="404.500" y="127.500" font-size="8.720" fill="#555">CREATIVE PRESENTATION</text>
    <text x="928" y="127.500" font-size="8.720" text-anchor="end" fill="#555">JANUARY 12, 2026</text>
    <text x="666" y="204" font-size="12.790" text-anchor="middle" fill="#555">CREATIVE</text>
    <text x="666" y="307.500" font-size="12.770" text-anchor="middle" fill="#444">PRESENTATION BY RICHARD SANCHEZ</text>
    <text x="404.500" y="382" font-size="8.720" fill="#555">@REALLYGREATSITE</text>
    <rect x="864.600" y="365.100" width="63.200" height="18.600" rx="9.300" fill="none" stroke="#55534f" stroke-width="1.500"/>
  </g></svg>
</div>
<div style="position:absolute;left:585.500px;top:468px;font-size:9px;line-height:10px;font-weight:700;color:#20242a">1</div>
<div style="position:absolute;left:669px;top:436.500px;width:80.500px;height:46px;border-radius:6px;background:#e8e9ef"></div>
<svg style="left:689px;top:454px" width="12" height="12" viewBox="0 0 12 12" fill="none" stroke="#0d1216" stroke-width="1.200" stroke-linecap="round"><path d="M6 .8 V11.200 M.8 6 H11.200"/></svg>
<svg style="left:731px;top:457px" width="9" height="6" viewBox="0 0 9 6" fill="none" stroke="#0d1216" stroke-width="1.200" stroke-linecap="round" stroke-linejoin="round"><path d="M1 1 L4.500 4.500 L8 1"/></svg>
<!-- footer -->
<div id="foot">
<style>#foot .f{fill:none;stroke:#3b424b;stroke-width:1.100;stroke-linecap:round;stroke-linejoin:round}</style>
  <svg class="f" style="left:319px;top:499px" width="14" height="13" viewBox="0 0 14 13"><path d="M1 2 H10 M1 5 H6.500 M1 8 H4 M1 11 H2"/><path d="M5.300 11.600 l.5 -2.200 L11 4.200 a.9 .9 0 0 1 1.300 0 l.4 .4 a.9 .9 0 0 1 0 1.300 L7.500 11.100 Z"/></svg>
  <span class="tx" style="left:336.08px;top:499.91px;font-size:10.50px;font-weight:400;color:#3b424b;transform:scaleX(1.0692);-webkit-text-stroke:.4px #3b424b">Notes</span>
  <svg class="f" style="left:377px;top:498px" width="13" height="15" viewBox="0 0 13 15"><circle cx="6.500" cy="8.500" r="5.300"/><path d="M6.500 5.800 V8.700 L8.200 10 M4.800 1.200 H8.200 M6.500 1.200 V3 M11 3.800 L11.800 4.600"/></svg>
  <span class="tx" style="left:395.46px;top:499.91px;font-size:10.50px;font-weight:400;color:#3b424b;transform:scaleX(1.0484);-webkit-text-stroke:.4px #3b424b">Timer</span>
  <div style="position:absolute;left:700px;top:504.500px;width:113.500px;height:1.600px;border-radius:1px;background:#d4d7de"></div>
  <div style="position:absolute;left:700px;top:504.300px;width:44px;height:2px;border-radius:1px;background:#a3a8b3"></div>
  <div style="position:absolute;left:737px;top:498.200px;width:14px;height:14px;border-radius:50%;background:#fff;border:.8px solid #c9cdd6;box-shadow:0 0 2px rgba(64,87,109,.25)"></div>
  <span class="tx" style="left:824.16px;top:500.08px;font-size:10.30px;font-weight:400;color:#3b424b;transform:scaleX(1.0388);-webkit-text-stroke:.4px #3b424b">43%</span>
  <div style="position:absolute;left:855.500px;top:494px;width:57px;height:22.500px;border-radius:4px;background:#dfe1e8"></div>
  <svg class="f" style="left:860.500px;top:499px" width="13" height="13" viewBox="0 0 13 13"><rect x="1" y="1" width="11" height="6.300" rx="1"/><rect x="1" y="9.300" width="3" height="2.700" rx=".6"/><rect x="5" y="9.300" width="3" height="2.700" rx=".6"/><rect x="9" y="9.300" width="3" height="2.700" rx=".6"/></svg>
  <span class="tx" style="left:877.66px;top:499.91px;font-size:10.50px;font-weight:400;color:#3b424b;transform:scaleX(0.9710);-webkit-text-stroke:.4px #3b424b">Pages</span>
  <span class="tx" style="left:918.42px;top:500.08px;font-size:10.30px;font-weight:400;color:#3b424b;transform:scaleX(1.1297);-webkit-text-stroke:.4px #3b424b">1 / 1</span>
  <svg class="f" style="left:953px;top:499px" width="13" height="13" viewBox="0 0 13 13"><rect x="1" y="1" width="4.200" height="4.200" rx="1"/><rect x="7.800" y="1" width="4.200" height="4.200" rx="1"/><rect x="1" y="7.800" width="4.200" height="4.200" rx="1"/><rect x="7.800" y="7.800" width="4.200" height="4.200" rx="1"/></svg>
  <svg class="f" style="left:977px;top:499px" width="13" height="13" viewBox="0 0 13 13"><path d="M7.800 1.200 H11.800 V5.200 M11.500 1.500 L7.800 5.200 M5.200 11.800 H1.200 V7.800 M1.500 11.500 L5.200 7.800"/></svg>
  <svg class="f" style="left:999.500px;top:498.500px" width="15" height="15" viewBox="0 0 15 15"><circle cx="7.500" cy="7.500" r="6.600"/><path d="M5.600 5.900 a1.900 1.900 0 1 1 2.900 1.600 c-.7 .4 -1 .8 -1 1.500"/><circle cx="7.500" cy="11" r=".5" fill="#3b424b"/></svg>
</div>
</div>
</body>
</html>
